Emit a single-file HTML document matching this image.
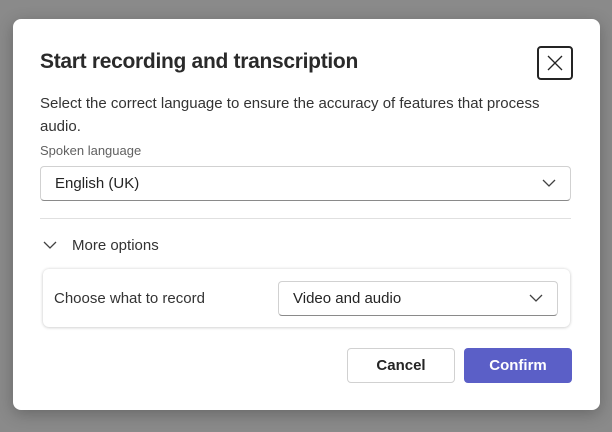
<!DOCTYPE html>
<html><head><style>
*{box-sizing:border-box;margin:0;padding:0}
body{width:612px;height:432px;background:#8a8a8a;font-family:"Liberation Sans",sans-serif;position:relative;overflow:hidden;color:#242424}
.dlg{position:absolute;left:13px;top:19px;width:587px;height:391px;background:#fff;border-radius:8px;box-shadow:0 4px 16px rgba(0,0,0,.25)}
.abs{position:absolute}
.title{left:27px;top:31px;font-size:21px;font-weight:bold;letter-spacing:-0.3px;color:#2a2a2a}
.close{left:524px;top:27px;width:36px;height:34px;border:2px solid #242424;border-radius:4px}
.desc{left:27px;top:73px;font-size:15px;line-height:23px;width:530px;color:#333}
.lbl{left:27px;top:124px;font-size:13px;color:#616161}
.sel{border:1px solid #d1d1d1;border-bottom-color:#8a8a8a;border-radius:4px;background:#fff;font-size:15px;padding-left:14px;display:flex;align-items:center}
.chev{position:absolute;right:14px;top:50%;margin-top:-5px}
.div{left:27px;top:199px;width:531px;height:1px;background:#e0e0e0}
.card{left:30px;top:250px;width:527px;height:58px;border-radius:6px;box-shadow:0 0 3px rgba(0,0,0,.15),0 1px 3px rgba(0,0,0,.1)}
.btn{top:329px;height:35px;border-radius:4px;font-size:15px;font-weight:bold;display:flex;align-items:center;justify-content:center}
</style></head><body>
<div class="dlg">
<div class="abs title">Start recording and transcription</div>
<div class="abs close"><svg width="32" height="30" viewBox="0 0 32 30"><path d="M9 8L23 22M23 8L9 22" stroke="#242424" stroke-width="1.3"/></svg></div>
<div class="abs desc">Select the correct language to ensure the accuracy of features that process audio.</div>
<div class="abs lbl">Spoken language</div>
<div class="abs sel" style="left:27px;top:147px;width:531px;height:35px">English (UK)<svg class="chev" width="14" height="9" viewBox="0 0 14 9"><path d="M1 1L7 7L13 1" stroke="#424242" stroke-width="1.3" fill="none"/></svg></div>
<div class="abs div"></div>
<svg class="abs" style="left:30px;top:222px" width="14" height="9" viewBox="0 0 14 9"><path d="M1 1L7 7L13 1" stroke="#424242" stroke-width="1.3" fill="none"/></svg>
<div class="abs" style="left:59px;top:218px;font-size:15px;color:#333">More options</div>
<div class="abs card">
<div class="abs" style="left:11px;top:21px;font-size:15px;color:#333">Choose what to record</div>
<div class="abs sel" style="left:235px;top:12px;width:280px;height:35px">Video and audio<svg class="chev" width="14" height="9" viewBox="0 0 14 9"><path d="M1 1L7 7L13 1" stroke="#424242" stroke-width="1.3" fill="none"/></svg></div>
</div>
<div class="abs btn" style="left:334px;width:108px;border:1px solid #d1d1d1;background:#fff">Cancel</div>
<div class="abs btn" style="left:451px;width:108px;background:#5b5fc7;color:#fff">Confirm</div>
</div>
</body></html>
